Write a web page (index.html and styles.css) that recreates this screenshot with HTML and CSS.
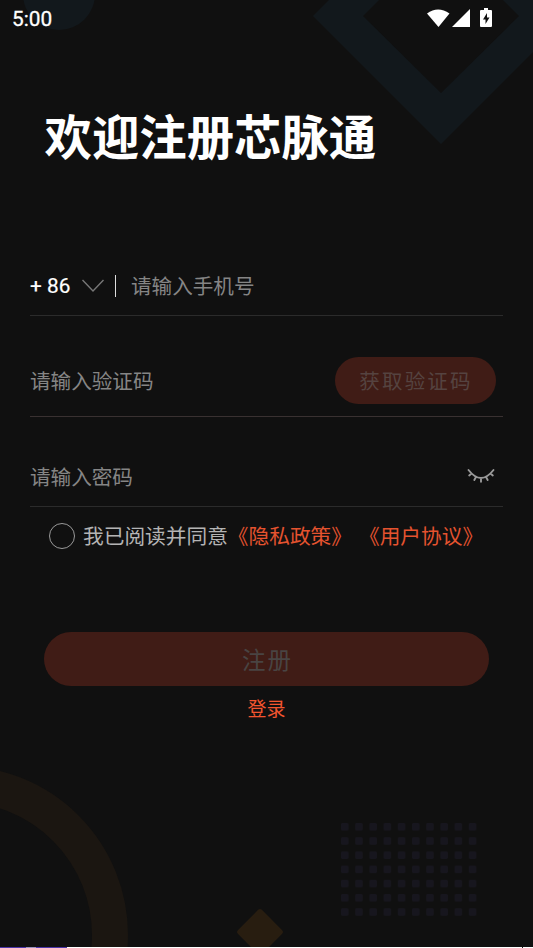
FILE: index.html
```html
<!DOCTYPE html>
<html lang="zh-CN">
<head>
<meta charset="utf-8">
<title>注册</title>
<link rel="stylesheet" href="styles.css">
</head>
<body>
<div class="screen">
  <svg class="backdrop" viewBox="0 0 533 948" aria-hidden="true">
    <defs>
      <pattern id="dots" x="341" y="823" width="14.2" height="14.2" patternUnits="userSpaceOnUse">
        <rect width="7.5" height="7.5" rx="1.500" fill="#17161e"/>
      </pattern>
    </defs>
    <circle cx="59" cy="-6" r="36" fill="#12181c"/>
    <path d="M441 -112L569 16L441 144L313 16Z M441 -62L363 16L441 93L519 16Z" fill="#12181c" fill-rule="evenodd"/>
    <circle cx="-41" cy="935" r="151" fill="none" stroke="#1b1611" stroke-width="36"/>
    <rect x="243" y="915" width="34" height="34" rx="3" transform="rotate(45 260 932)" fill="#281d10"/>
    <rect x="341" y="823" width="136" height="93" fill="url(#dots)"/>
  </svg>
  <header class="status">
    <span class="clock">5:00</span>
    <svg class="status-icons" width="66" height="20" viewBox="0 0 66 20" fill="#fff">
      <path d="M0 4.500Q11 -3.500 22.500 4.500L11.500 18Z"/>
      <path d="M43 0V18H25Z"/>
      <path fill-rule="evenodd" d="M57 -1H61V1H64Q65 1 65 2V17Q65 18 64 18H54Q53 18 53 17V2Q53 1 54 1H57Z M60 4L56 10.500H58.500V15L62.500 8.500H60Z"/>
    </svg>
  </header>
  <main class="form">
    <h1 class="title">欢迎注册芯脉通</h1>
    <div class="field phone">
      <span class="code">+ 86</span>
      <svg class="chevron" width="22" height="14" viewBox="0 0 22 14" fill="none" stroke="#777" stroke-width="1.400"><path d="M.5 1L11 12L21.500 1"/></svg>
      <span class="divider"></span>
      <span class="hint">请输入手机号</span>
    </div>
    <div class="field verify">
      <span class="hint">请输入验证码</span>
      <button class="send">获取验证码</button>
    </div>
    <div class="field password">
      <span class="hint">请输入密码</span>
      <svg class="eye" width="28" height="16" viewBox="0 0 28 16" fill="none" stroke="#999" stroke-width="1.900" stroke-linecap="round"><path d="M1.500 2Q14 18 26.500 2M4.500 5.500L2.200 7.500M9 9L7.300 12M14 10.200V13.700M19 9L20.700 12M23.500 5.500L25.800 7.500"/></svg>
    </div>
    <div class="agree">
      <span class="radio"></span>
      <span class="agree-text">我已阅读并同意</span>
      <a class="link privacy">《隐私政策》</a>
      <a class="link terms">《用户协议》</a>
    </div>
    <button class="submit">注册</button>
    <a class="login">登录</a>
  </main>
  <div class="strip"></div>
</div>
</body>
</html>
```

FILE: styles.css
```css
* { box-sizing: border-box; }
body { margin: 0; background: #101010; }
.screen {
  position: relative;
  width: 533px;
  height: 948px;
  overflow: hidden;
  color: #fff;
  font-family: Roboto, "Noto Sans CJK SC", sans-serif;
}
.backdrop { position: absolute; inset: 0; width: 533px; height: 948px; }
.status {
  position: relative;
  display: flex;
  justify-content: space-between;
  height: 38px;
  padding: 8px 40.5px 0 12px;
}
.clock { font-size: 20.8px; line-height: 23px; -webkit-text-stroke: 0.3px #fff; }
.status-icons { overflow: visible; margin-top: 1px; }
.form { position: relative; display: flex; flex-direction: column; padding: 0 30px; }
.title {
  margin: 65px 0 0 14.5px;
  font-size: 47.4px;
  line-height: 72px;
  font-weight: 700;
  white-space: nowrap;
}
.field { display: flex; align-items: center; border-bottom: 1px solid #2b2b2b; }
.hint { padding-top: 2px; color: #858585; font-size: 20.6px; line-height: 30px; white-space: nowrap; }
.phone { height: 60px; margin-top: 81px; }
.code { width: 52px; padding-top: 1px; font-size: 20.8px; line-height: 30px; -webkit-text-stroke: 0.2px #fff; }
.chevron { margin-left: -0.5px; }
.divider { width: 1px; height: 22px; margin: 0 16px 0 11.5px; background: #ddd; }
.phone .hint { margin-left: -1px; }
.verify { height: 71px; margin-top: 30px; border-color: #393131; justify-content: space-between; padding-right: 7px; }
.send {
  width: 161px;
  height: 47px;
  margin-bottom: 2px;
  padding: 0 0 0 1px;
  border: 0;
  border-radius: 24px;
  background: #401c16;
  color: #554340;
  font: inherit;
  font-size: 20.5px;
  letter-spacing: 2.2px;
}
.password { height: 60px; margin-top: 30px; justify-content: space-between; padding-right: 8px; }
.eye { margin-bottom: 1px; }
.agree { display: flex; align-items: center; height: 57px; padding-left: 19px; font-size: 20.7px; white-space: nowrap; }
.agree-text, .link { padding-bottom: 2px; }
.radio { width: 26px; height: 26px; margin-right: 8px; border: 1.5px solid #999; border-radius: 50%; }
.agree-text { color: #b4b4b4; }
.link { color: #e5532f; }
.terms { margin-left: 7px; }
.submit {
  width: 445px;
  height: 54px;
  margin: 68px 0 0 14px;
  padding: 0 0 1px 2px;
  border: 0;
  border-radius: 27px;
  background: #401c16;
  color: #494443;
  font: inherit;
  font-size: 23.5px;
  letter-spacing: 2px;
}
.login { align-self: center; margin-top: 10px; color: #f2552f; font-size: 19px; line-height: 28px; }
.strip {
  position: absolute;
  left: 0;
  right: 0;
  bottom: 0;
  height: 1px;
  background: linear-gradient(90deg, #4a35a8 0 26px, #9a92c0 26px 36px, #4a35a8 36px 67px, #fff 67px 522px, #222 522px 523px, #fff 523px);
}
```
